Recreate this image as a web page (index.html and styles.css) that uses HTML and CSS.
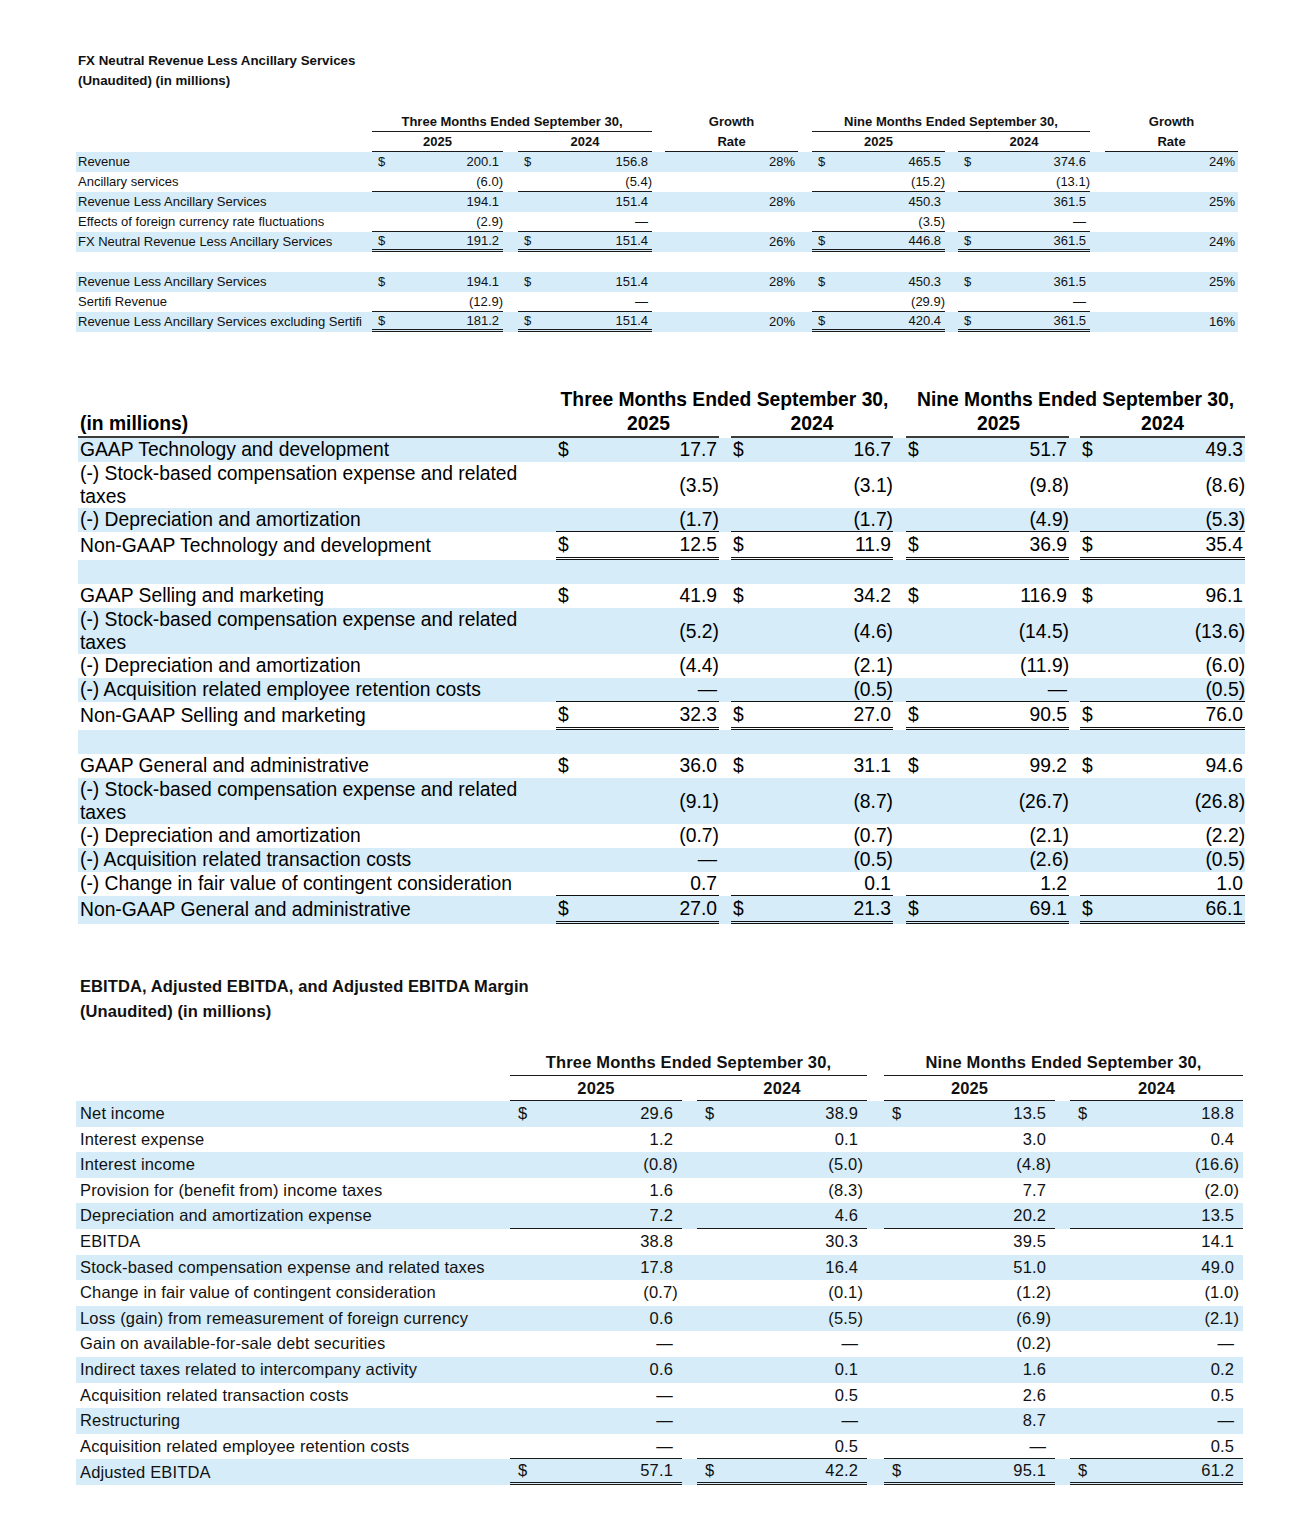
FILE: index.html
```html
<!DOCTYPE html>
<html lang="en">
<head>
<meta charset="utf-8">
<title>FX Neutral Revenue, Non-GAAP Expenses and Adjusted EBITDA</title>
<link rel="stylesheet" href="styles.css">
</head>
<body>
<main class="page">

  <h2 class="title t1-title">FX Neutral Revenue Less Ancillary Services<br>(Unaudited) (in millions)</h2>
  <table class="fin t1">
    <colgroup>
      <col class="w-lab"><col class="w-cur"><col class="w-na"><col class="w-s15"><col class="w-cur"><col class="w-nb"><col class="w-s13"><col class="w-gr"><col class="w-s14"><col class="w-cur"><col class="w-nc"><col class="w-s13"><col class="w-cur"><col class="w-nd"><col class="w-s15"><col class="w-gr">
    </colgroup>
    <thead>
      <tr><th></th><th colspan="5" class="u">Three Months Ended September 30,</th><th></th><th>Growth</th><th></th><th colspan="5" class="u">Nine Months Ended September 30,</th><th></th><th>Growth</th></tr>
      <tr><th></th><th colspan="2" class="u">2025</th><th></th><th colspan="2" class="u">2024</th><th></th><th class="u">Rate</th><th></th><th colspan="2" class="u">2025</th><th></th><th colspan="2" class="u">2024</th><th></th><th class="u">Rate</th></tr>
    </thead>
    <tbody>
      <tr class="hl"><td class="lab">Revenue</td><td class="cur">$</td><td class="num">200.1</td><td></td><td class="cur">$</td><td class="num">156.8</td><td></td><td class="num gr">28%</td><td></td><td class="cur">$</td><td class="num">465.5</td><td></td><td class="cur">$</td><td class="num">374.6</td><td></td><td class="num gr">24%</td></tr>
      <tr><td class="lab">Ancillary services</td><td class="cur u"></td><td class="num u"><span class="ng">(6.0)</span></td><td></td><td class="cur u"></td><td class="num u"><span class="ng">(5.4)</span></td><td></td><td></td><td></td><td class="cur u"></td><td class="num u"><span class="ng">(15.2)</span></td><td></td><td class="cur u"></td><td class="num u"><span class="ng">(13.1)</span></td><td></td><td></td></tr>
      <tr class="hl"><td class="lab">Revenue Less Ancillary Services</td><td class="cur"></td><td class="num">194.1</td><td></td><td class="cur"></td><td class="num">151.4</td><td></td><td class="num gr">28%</td><td></td><td class="cur"></td><td class="num">450.3</td><td></td><td class="cur"></td><td class="num">361.5</td><td></td><td class="num gr">25%</td></tr>
      <tr><td class="lab">Effects of foreign currency rate fluctuations</td><td class="cur u"></td><td class="num u"><span class="ng">(2.9)</span></td><td></td><td class="cur u"></td><td class="num u">—</td><td></td><td></td><td></td><td class="cur u"></td><td class="num u"><span class="ng">(3.5)</span></td><td></td><td class="cur u"></td><td class="num u">—</td><td></td><td></td></tr>
      <tr class="hl"><td class="lab">FX Neutral Revenue Less Ancillary Services</td><td class="cur uu">$</td><td class="num uu">191.2</td><td></td><td class="cur uu">$</td><td class="num uu">151.4</td><td></td><td class="num gr">26%</td><td></td><td class="cur uu">$</td><td class="num uu">446.8</td><td></td><td class="cur uu">$</td><td class="num uu">361.5</td><td></td><td class="num gr">24%</td></tr>
      <tr><td class="lab">&nbsp;</td><td colspan="15"></td></tr>
      <tr class="hl"><td class="lab">Revenue Less Ancillary Services</td><td class="cur">$</td><td class="num">194.1</td><td></td><td class="cur">$</td><td class="num">151.4</td><td></td><td class="num gr">28%</td><td></td><td class="cur">$</td><td class="num">450.3</td><td></td><td class="cur">$</td><td class="num">361.5</td><td></td><td class="num gr">25%</td></tr>
      <tr><td class="lab">Sertifi Revenue</td><td class="cur u"></td><td class="num u"><span class="ng">(12.9)</span></td><td></td><td class="cur u"></td><td class="num u">—</td><td></td><td></td><td></td><td class="cur u"></td><td class="num u"><span class="ng">(29.9)</span></td><td></td><td class="cur u"></td><td class="num u">—</td><td></td><td></td></tr>
      <tr class="hl"><td class="lab">Revenue Less Ancillary Services excluding Sertifi</td><td class="cur uu">$</td><td class="num uu">181.2</td><td></td><td class="cur uu">$</td><td class="num uu">151.4</td><td></td><td class="num gr">20%</td><td></td><td class="cur uu">$</td><td class="num uu">420.4</td><td></td><td class="cur uu">$</td><td class="num uu">361.5</td><td></td><td class="num gr">16%</td></tr>
    </tbody>
  </table>

  <table class="fin t2">
    <colgroup>
      <col class="w-lab"><col class="w-cur"><col class="w-na"><col class="w-s12"><col class="w-cur"><col class="w-nb"><col class="w-s13"><col class="w-cur"><col class="w-nc"><col class="w-s11"><col class="w-cur"><col class="w-nd">
    </colgroup>
    <thead>
      <tr><th></th><th colspan="5">Three Months Ended September 30,</th><th></th><th colspan="5">Nine Months Ended September 30,</th></tr>
      <tr><th class="lab u2">(in millions)</th><th colspan="2" class="u2 yr25">2025</th><th></th><th colspan="2" class="u2">2024</th><th></th><th colspan="2" class="u2 yr25">2025</th><th></th><th colspan="2" class="u2">2024</th></tr>
    </thead>
    <tbody>
      <tr class="hl"><td class="lab">GAAP Technology and development</td><td class="cur">$</td><td class="num">17.7</td><td></td><td class="cur">$</td><td class="num">16.7</td><td></td><td class="cur">$</td><td class="num">51.7</td><td></td><td class="cur">$</td><td class="num">49.3</td></tr>
      <tr class="two"><td class="lab">(-) Stock-based compensation expense and related taxes</td><td class="cur"></td><td class="num"><span class="ng">(3.5)</span></td><td></td><td class="cur"></td><td class="num"><span class="ng">(3.1)</span></td><td></td><td class="cur"></td><td class="num"><span class="ng">(9.8)</span></td><td></td><td class="cur"></td><td class="num"><span class="ng">(8.6)</span></td></tr>
      <tr class="hl"><td class="lab">(-) Depreciation and amortization</td><td class="cur u"></td><td class="num u"><span class="ng">(1.7)</span></td><td></td><td class="cur u"></td><td class="num u"><span class="ng">(1.7)</span></td><td></td><td class="cur u"></td><td class="num u"><span class="ng">(4.9)</span></td><td></td><td class="cur u"></td><td class="num u"><span class="ng">(5.3)</span></td></tr>
      <tr><td class="lab">Non-GAAP Technology and development</td><td class="cur uu">$</td><td class="num uu">12.5</td><td></td><td class="cur uu">$</td><td class="num uu">11.9</td><td></td><td class="cur uu">$</td><td class="num uu">36.9</td><td></td><td class="cur uu">$</td><td class="num uu">35.4</td></tr>
      <tr class="hl"><td class="lab">&nbsp;</td><td colspan="11"></td></tr>

      <tr><td class="lab">GAAP Selling and marketing</td><td class="cur">$</td><td class="num">41.9</td><td></td><td class="cur">$</td><td class="num">34.2</td><td></td><td class="cur">$</td><td class="num">116.9</td><td></td><td class="cur">$</td><td class="num">96.1</td></tr>
      <tr class="hl two"><td class="lab">(-) Stock-based compensation expense and related taxes</td><td class="cur"></td><td class="num"><span class="ng">(5.2)</span></td><td></td><td class="cur"></td><td class="num"><span class="ng">(4.6)</span></td><td></td><td class="cur"></td><td class="num"><span class="ng">(14.5)</span></td><td></td><td class="cur"></td><td class="num"><span class="ng">(13.6)</span></td></tr>
      <tr><td class="lab">(-) Depreciation and amortization</td><td class="cur"></td><td class="num"><span class="ng">(4.4)</span></td><td></td><td class="cur"></td><td class="num"><span class="ng">(2.1)</span></td><td></td><td class="cur"></td><td class="num"><span class="ng">(11.9)</span></td><td></td><td class="cur"></td><td class="num"><span class="ng">(6.0)</span></td></tr>
      <tr class="hl"><td class="lab">(-) Acquisition related employee retention costs</td><td class="cur u"></td><td class="num u">—</td><td></td><td class="cur u"></td><td class="num u"><span class="ng">(0.5)</span></td><td></td><td class="cur u"></td><td class="num u">—</td><td></td><td class="cur u"></td><td class="num u"><span class="ng">(0.5)</span></td></tr>
      <tr><td class="lab">Non-GAAP Selling and marketing</td><td class="cur uu">$</td><td class="num uu">32.3</td><td></td><td class="cur uu">$</td><td class="num uu">27.0</td><td></td><td class="cur uu">$</td><td class="num uu">90.5</td><td></td><td class="cur uu">$</td><td class="num uu">76.0</td></tr>
      <tr class="hl"><td class="lab">&nbsp;</td><td colspan="11"></td></tr>

      <tr><td class="lab">GAAP General and administrative</td><td class="cur">$</td><td class="num">36.0</td><td></td><td class="cur">$</td><td class="num">31.1</td><td></td><td class="cur">$</td><td class="num">99.2</td><td></td><td class="cur">$</td><td class="num">94.6</td></tr>
      <tr class="hl two"><td class="lab">(-) Stock-based compensation expense and related taxes</td><td class="cur"></td><td class="num"><span class="ng">(9.1)</span></td><td></td><td class="cur"></td><td class="num"><span class="ng">(8.7)</span></td><td></td><td class="cur"></td><td class="num"><span class="ng">(26.7)</span></td><td></td><td class="cur"></td><td class="num"><span class="ng">(26.8)</span></td></tr>
      <tr><td class="lab">(-) Depreciation and amortization</td><td class="cur"></td><td class="num"><span class="ng">(0.7)</span></td><td></td><td class="cur"></td><td class="num"><span class="ng">(0.7)</span></td><td></td><td class="cur"></td><td class="num"><span class="ng">(2.1)</span></td><td></td><td class="cur"></td><td class="num"><span class="ng">(2.2)</span></td></tr>
      <tr class="hl"><td class="lab">(-) Acquisition related transaction costs</td><td class="cur"></td><td class="num">—</td><td></td><td class="cur"></td><td class="num"><span class="ng">(0.5)</span></td><td></td><td class="cur"></td><td class="num"><span class="ng">(2.6)</span></td><td></td><td class="cur"></td><td class="num"><span class="ng">(0.5)</span></td></tr>
      <tr><td class="lab">(-) Change in fair value of contingent consideration</td><td class="cur u"></td><td class="num u">0.7</td><td></td><td class="cur u"></td><td class="num u">0.1</td><td></td><td class="cur u"></td><td class="num u">1.2</td><td></td><td class="cur u"></td><td class="num u">1.0</td></tr>
      <tr class="hl"><td class="lab">Non-GAAP General and administrative</td><td class="cur uu">$</td><td class="num uu">27.0</td><td></td><td class="cur uu">$</td><td class="num uu">21.3</td><td></td><td class="cur uu">$</td><td class="num uu">69.1</td><td></td><td class="cur uu">$</td><td class="num uu">66.1</td></tr>
    </tbody>
  </table>

  <h2 class="title t3-title">EBITDA, Adjusted EBITDA, and Adjusted EBITDA Margin<br>(Unaudited) (in millions)</h2>
  <table class="fin t3">
    <colgroup>
      <col class="w-lab"><col class="w-cur"><col class="w-na"><col class="w-s15"><col class="w-cur"><col class="w-nb"><col class="w-s17"><col class="w-cur"><col class="w-nc"><col class="w-s15"><col class="w-cur"><col class="w-nd">
    </colgroup>
    <thead>
      <tr><th></th><th colspan="5" class="u">Three Months Ended September 30,</th><th></th><th colspan="5" class="u">Nine Months Ended September 30,</th></tr>
      <tr><th></th><th colspan="2" class="u">2025</th><th></th><th colspan="2" class="u">2024</th><th></th><th colspan="2" class="u">2025</th><th></th><th colspan="2" class="u">2024</th></tr>
    </thead>
    <tbody>
      <tr class="hl"><td class="lab">Net income</td><td class="cur">$</td><td class="num">29.6</td><td></td><td class="cur">$</td><td class="num">38.9</td><td></td><td class="cur">$</td><td class="num">13.5</td><td></td><td class="cur">$</td><td class="num">18.8</td></tr>
      <tr><td class="lab">Interest expense</td><td class="cur"></td><td class="num">1.2</td><td></td><td class="cur"></td><td class="num">0.1</td><td></td><td class="cur"></td><td class="num">3.0</td><td></td><td class="cur"></td><td class="num">0.4</td></tr>
      <tr class="hl"><td class="lab">Interest income</td><td class="cur"></td><td class="num"><span class="ng">(0.8)</span></td><td></td><td class="cur"></td><td class="num"><span class="ng">(5.0)</span></td><td></td><td class="cur"></td><td class="num"><span class="ng">(4.8)</span></td><td></td><td class="cur"></td><td class="num"><span class="ng">(16.6)</span></td></tr>
      <tr><td class="lab">Provision for (benefit from) income taxes</td><td class="cur"></td><td class="num">1.6</td><td></td><td class="cur"></td><td class="num"><span class="ng">(8.3)</span></td><td></td><td class="cur"></td><td class="num">7.7</td><td></td><td class="cur"></td><td class="num"><span class="ng">(2.0)</span></td></tr>
      <tr class="hl"><td class="lab">Depreciation and amortization expense</td><td class="cur u"></td><td class="num u">7.2</td><td></td><td class="cur u"></td><td class="num u">4.6</td><td></td><td class="cur u"></td><td class="num u">20.2</td><td></td><td class="cur u"></td><td class="num u">13.5</td></tr>
      <tr><td class="lab">EBITDA</td><td class="cur"></td><td class="num">38.8</td><td></td><td class="cur"></td><td class="num">30.3</td><td></td><td class="cur"></td><td class="num">39.5</td><td></td><td class="cur"></td><td class="num">14.1</td></tr>
      <tr class="hl"><td class="lab">Stock-based compensation expense and related taxes</td><td class="cur"></td><td class="num">17.8</td><td></td><td class="cur"></td><td class="num">16.4</td><td></td><td class="cur"></td><td class="num">51.0</td><td></td><td class="cur"></td><td class="num">49.0</td></tr>
      <tr><td class="lab">Change in fair value of contingent consideration</td><td class="cur"></td><td class="num"><span class="ng">(0.7)</span></td><td></td><td class="cur"></td><td class="num"><span class="ng">(0.1)</span></td><td></td><td class="cur"></td><td class="num"><span class="ng">(1.2)</span></td><td></td><td class="cur"></td><td class="num"><span class="ng">(1.0)</span></td></tr>
      <tr class="hl"><td class="lab">Loss (gain) from remeasurement of foreign currency</td><td class="cur"></td><td class="num">0.6</td><td></td><td class="cur"></td><td class="num"><span class="ng">(5.5)</span></td><td></td><td class="cur"></td><td class="num"><span class="ng">(6.9)</span></td><td></td><td class="cur"></td><td class="num"><span class="ng">(2.1)</span></td></tr>
      <tr><td class="lab">Gain on available-for-sale debt securities</td><td class="cur"></td><td class="num">—</td><td></td><td class="cur"></td><td class="num">—</td><td></td><td class="cur"></td><td class="num"><span class="ng">(0.2)</span></td><td></td><td class="cur"></td><td class="num">—</td></tr>
      <tr class="hl"><td class="lab">Indirect taxes related to intercompany activity</td><td class="cur"></td><td class="num">0.6</td><td></td><td class="cur"></td><td class="num">0.1</td><td></td><td class="cur"></td><td class="num">1.6</td><td></td><td class="cur"></td><td class="num">0.2</td></tr>
      <tr><td class="lab">Acquisition related transaction costs</td><td class="cur"></td><td class="num">—</td><td></td><td class="cur"></td><td class="num">0.5</td><td></td><td class="cur"></td><td class="num">2.6</td><td></td><td class="cur"></td><td class="num">0.5</td></tr>
      <tr class="hl"><td class="lab">Restructuring</td><td class="cur"></td><td class="num">—</td><td></td><td class="cur"></td><td class="num">—</td><td></td><td class="cur"></td><td class="num">8.7</td><td></td><td class="cur"></td><td class="num">—</td></tr>
      <tr><td class="lab">Acquisition related employee retention costs</td><td class="cur u"></td><td class="num u">—</td><td></td><td class="cur u"></td><td class="num u">0.5</td><td></td><td class="cur u"></td><td class="num u">—</td><td></td><td class="cur u"></td><td class="num u">0.5</td></tr>
      <tr class="hl"><td class="lab">Adjusted EBITDA</td><td class="cur uu">$</td><td class="num uu">57.1</td><td></td><td class="cur uu">$</td><td class="num uu">42.2</td><td></td><td class="cur uu">$</td><td class="num uu">95.1</td><td></td><td class="cur uu">$</td><td class="num uu">61.2</td></tr>
    </tbody>
  </table>

</main>
</body>
</html>
```

FILE: styles.css
```css
* { box-sizing: border-box; }

body {
  margin: 0;
  background: #ffffff;
  color: #111111;
  font-family: "Liberation Sans", Arial, sans-serif;
}

.page {
  width: 1310px;
  padding: 51px 0 40px 76px;
}

.title {
  margin: 0;
  font-weight: bold;
  color: #111111;
}

.fin {
  border-collapse: separate;
  border-spacing: 0;
  table-layout: fixed;
}

.fin td,
.fin th {
  padding: 0;
  white-space: nowrap;
  vertical-align: middle;
}

.fin th { font-weight: bold; text-align: center; }
.fin .lab { text-align: left; white-space: normal; }
.fin .num { text-align: right; }
.fin .cur { text-align: left; }
.fin .ng { display: inline-block; margin-right: var(--hang); }

.hl { background: #d6ecf8; }

/* ---------- Table 1: FX neutral revenue ---------- */
.t1-title {
  margin-left: 2px;
  font-size: 13.3px;
  line-height: 20px;
}

.t1 {
  width: 1162px;
  margin-top: 21px;
  font-size: 13px;
  --hang: -4px;
}
.t1 .w-lab { width: 296px; }
.t1 .w-cur { width: 22px; }
.t1 .w-na { width: 109px; }
.t1 .w-nb { width: 112px; }
.t1 .w-nc { width: 111px; }
.t1 .w-nd { width: 110px; }
.t1 .w-gr { width: 133px; }
.t1 .w-s15 { width: 15px; }
.t1 .w-s14 { width: 14px; }
.t1 .w-s13 { width: 13px; }

.t1 td,
.t1 th { line-height: 20px; }
.t1 .lab { padding-left: 2px; }
.t1 .cur { padding-left: 6px; }
.t1 .num { padding-right: 4px; }
.t1 .gr { padding-right: 3px; }
.t1 .u { border-bottom: 1px solid #1a1a1a; line-height: 19px; }
.t1 .uu { border-bottom: 3px double #1a1a1a; line-height: 17px; }

/* ---------- Table 2: Non-GAAP expenses ---------- */
.t2 {
  width: 1167px;
  margin: 56px 0 0 2px;
  font-size: 19.3px;
  color: #000000;
  --hang: -2px;
}
.t2 .w-lab { width: 478px; }
.t2 .w-cur { width: 24px; }
.t2 .w-na { width: 139px; }
.t2 .w-nb { width: 138px; }
.t2 .w-nc { width: 139px; }
.t2 .w-nd { width: 141px; }
.t2 .w-s12 { width: 12px; }
.t2 .w-s13 { width: 13px; }
.t2 .w-s11 { width: 11px; }

.t2 td,
.t2 th { line-height: 24px; }
.t2 .u2 { border-bottom: 2px solid #3c3c3c; }
.t2 .yr25 { padding-left: 22px; }
.t2 .lab { padding-left: 2px; }
.t2 .two td { line-height: 23px; }
.t2 .cur { padding-left: 2px; }
.t2 .num { padding-right: 2px; }
.t2 .u { border-bottom: 1px solid #111111; line-height: 23px; }
.t2 .uu { border-bottom: 3px double #111111; line-height: 25px; }

/* ---------- Table 3: EBITDA ---------- */
.t3-title {
  margin: 50px 0 0 4px;
  font-size: 16.5px;
  line-height: 25px;
  letter-spacing: 0.1px;
}

.t3 {
  width: 1167px;
  margin-top: 26px;
  font-size: 16.5px;
  letter-spacing: 0.15px;
  --hang: -5px;
}
.t3 .w-lab { width: 434px; }
.t3 .w-cur { width: 30px; }
.t3 .w-na { width: 142px; }
.t3 .w-nb { width: 140px; }
.t3 .w-nc { width: 141px; }
.t3 .w-nd { width: 143px; }
.t3 .w-s15 { width: 15px; }
.t3 .w-s17 { width: 17px; }

.t3 td { line-height: 25.6px; }
.t3 thead th { line-height: 25.5px; }
.t3 .lab { padding-left: 4px; }
.t3 .cur { padding-left: 8px; }
.t3 .num { padding-right: 9px; }
.t3 .u { border-bottom: 1px solid #1a1a1a; line-height: 24.6px; }
.t3 thead .u { line-height: 24.5px; }
.t3 .uu { border-bottom: 3px double #1a1a1a; line-height: 23px; }
```
